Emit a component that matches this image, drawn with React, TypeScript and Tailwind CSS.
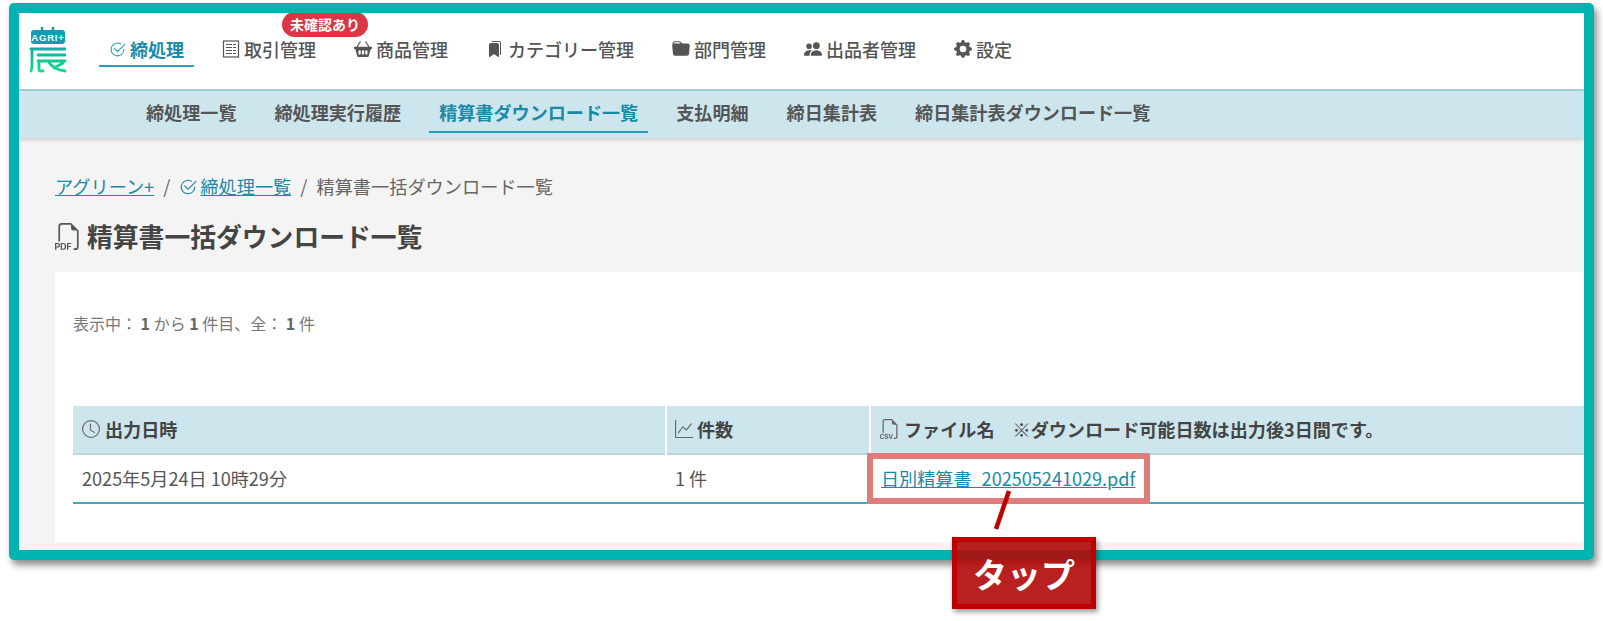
import type { ReactNode } from "react";
import {
  BsBasket2Fill,
  BsBookmarksFill,
  BsCheck2Circle,
  BsClock,
  BsFiletypeCsv,
  BsFiletypePdf,
  BsFolderFill,
  BsGearFill,
  BsGraphUp,
  BsPeopleFill,
} from "react-icons/bs";

function Logo() {
  return (
    <svg width="38" height="48" viewBox="0 0 38 48" fill="none" className="mt-[-2px] shrink-0">
      <defs>
        <linearGradient id="logo" gradientUnits="userSpaceOnUse" x1="0" y1="20" x2="0" y2="46">
          <stop offset="0" stopColor="#12a8a8" />
          <stop offset="1" stopColor="#12e08a" />
        </linearGradient>
      </defs>
      <path d="M13 1v4M24 1v4" stroke="#0f9ab0" strokeWidth="2.400" />
      <rect x="2" y="4" width="34" height="14" rx="3" fill="#0e9fb0" />
      <text x="19" y="14.500" textAnchor="middle" fill="#fff" fontSize="9.500" fontWeight="700" letterSpacing="0.8" fontFamily="Liberation Sans, sans-serif">
        AGRI+
      </text>
      <path
        d="M2 23h34M9 29h27M9 35h27M3 23v16c0 3-.5 4.500-1 6M10 35v9c0 1 1 1 4 1M19 35c3 5 9 9 17 10M34 37l-9 5"
        stroke="url(#logo)"
        strokeWidth="2.800"
        strokeLinecap="round"
      />
    </svg>
  );
}

function ListIcon() {
  return (
    <svg width="18" height="18" viewBox="0 0 18 18" fill="none" stroke="#555" strokeWidth="1.2">
      <rect x="1.5" y="1" width="15" height="16" />
      <path d="M4 4.500h10M4 7.500h10M4 10.500h10M4 13.500h10" strokeDasharray="6 1 3" />
    </svg>
  );
}

function MainNavItem({ icon, label, active, badge }: { icon: ReactNode; label: string; active?: boolean; badge?: boolean }) {
  return (
    <div
      className={`relative flex h-[30px] items-center gap-1 border-b-2 px-2.5 pb-[3px] text-[18px] ${
        active ? "border-[#2a9dbb] font-bold text-[#1a8aa8]" : "border-transparent font-medium text-[#555]"
      }`}
    >
      {icon}
      <span>{label}</span>
      {badge && (
        <span className="absolute left-[70px] top-[-25px] flex h-[25px] w-[86px] items-center justify-center rounded-full bg-[#dc3545] text-[14px] font-bold text-white">
          未確認あり
        </span>
      )}
    </div>
  );
}

function SubNavItem({ label, active }: { label: string; active?: boolean }) {
  return (
    <div
      className={`flex h-[34px] items-center border-b-2 px-2.5 pb-[4px] text-[18.100px] font-bold ${
        active ? "border-[#2a9dbb] text-[#1a8aa8]" : "border-transparent text-[#555]"
      }`}
    >
      {label}
    </div>
  );
}

export default function App() {
  return (
    <div className="h-[621px] w-full overflow-hidden bg-white pl-[9px] pr-[9px] pt-[3px] text-[#555]" style={{ fontFamily: '"Noto Sans CJK JP", "Noto Sans", sans-serif' }}>
      <div className="relative h-[557px] rounded-[5px] border-[10px] border-[#00b2b0] shadow-[3px_5px_7px_rgba(0,0,0,0.45)]">
        <div className="flex h-full flex-col overflow-hidden">
          {/* top nav */}
          <header className="flex h-[78px] shrink-0 items-center border-b-2 border-[#9fd0dc] bg-white pl-[10px]">
            <Logo />
            <nav className="ml-[32px] mt-[1px] flex gap-[18px]">
              <MainNavItem icon={<BsCheck2Circle className="text-[17px] text-[#2a9dbb]" />} label="締処理" active />
              <MainNavItem icon={<ListIcon />} label="取引管理" badge />
              <MainNavItem icon={<BsBasket2Fill className="text-[18px]" />} label="商品管理" />
              <MainNavItem icon={<span className="flex w-[18px] justify-center"><BsBookmarksFill className="text-[16px]" /></span>} label="カテゴリー管理" />
              <MainNavItem icon={<BsFolderFill className="text-[18px]" />} label="部門管理" />
              <MainNavItem icon={<BsPeopleFill className="text-[18px]" />} label="出品者管理" />
              <MainNavItem icon={<BsGearFill className="text-[18px]" />} label="設定" />
            </nav>
          </header>

          {/* sub nav */}
          <div className="z-10 flex h-[47px] shrink-0 items-start gap-[18px] bg-[#cde6ee] pl-[117px] pt-[8px] shadow-[0_2px_4px_rgba(0,0,0,0.15)]">
            <SubNavItem label="締処理一覧" />
            <SubNavItem label="締処理実行履歴" />
            <SubNavItem label="精算書ダウンロード一覧" active />
            <SubNavItem label="支払明細" />
            <SubNavItem label="締日集計表" />
            <SubNavItem label="締日集計表ダウンロード一覧" />
          </div>

          <main className="flex-1 bg-[#f4f4f4] pl-[36px] pt-[36px]">
            <div className="flex h-[26px] items-center gap-[9px] text-[18.200px] text-[#666]">
              <a className="text-[#1a8aa8] underline">アグリーン+</a>
              <span>/</span>
              <span className="flex items-center text-[#1a8aa8]">
                <BsCheck2Circle className="mr-[3px] text-[18px]" />
                <a className="underline">締処理一覧</a>
              </span>
              <span>/</span>
              <span>精算書一括ダウンロード一覧</span>
            </div>

            <h1 className="mt-[18px] flex h-[36px] items-center gap-[5px] text-[25.800px] font-bold text-[#444]">
              <BsFiletypePdf className="text-[27px] text-[#555]" />
              精算書一括ダウンロード一覧
            </h1>

            <section className="mt-[18px] h-[270px] bg-white pl-[18px]">
              <p className="pt-[39px] text-[16px] leading-[24px] text-[#777]">
                表示中： <b className="font-bold text-[#666]">1</b> から <b className="font-bold text-[#666]">1</b> 件目、全： <b className="font-bold text-[#666]">1</b> 件
              </p>

              <table className="mt-[71px] w-full table-fixed border-collapse text-[18.100px]">
                <colgroup>
                  <col className="w-[593px]" />
                  <col className="w-[204px]" />
                  <col />
                </colgroup>
                <thead>
                  <tr className="h-[48px] border-b-2 border-[#bcd6df] bg-[#cde6ee] text-left font-bold text-[#444]">
                    <th className="border-r-2 border-white pl-[9px]">
                      <span className="flex items-center gap-[5px]">
                        <BsClock className="text-[18px] text-[#666]" />
                        出力日時
                      </span>
                    </th>
                    <th className="border-r-2 border-white pl-[8px]">
                      <span className="flex items-center gap-[4px]">
                        <BsGraphUp className="text-[18px] text-[#666]" />
                        件数
                      </span>
                    </th>
                    <th className="whitespace-nowrap pl-[9px]">
                      <span className="flex items-center gap-[4px]">
                        <BsFiletypeCsv className="text-[20px] text-[#666]" />
                        ファイル名　※ダウンロード可能日数は出力後3日間です。
                      </span>
                    </th>
                  </tr>
                </thead>
                <tbody>
                  <tr className="h-[49px] border-b-2 border-[#3fa9bf] text-[#555]">
                    <td className="pl-[9px]">2025年5月24日 10時29分</td>
                    <td className="pl-[9px]">1 件</td>
                    <td className="pl-[11px]">
                      <a className="text-[#1a8aa8] underline">日別精算書_202505241029.pdf</a>
                    </td>
                  </tr>
                </tbody>
              </table>
            </section>
          </main>
        </div>

        {/* annotation over the screenshot */}
        <div className="absolute left-[848px] top-[440px] h-[51px] w-[283px] border-[6px] border-[#e07c7c]" />
        <svg className="absolute left-[970px] top-[476px]" width="30" height="42" viewBox="0 0 30 42">
          <path d="M20 2 7 40" stroke="#c00000" strokeWidth="4.500" />
        </svg>
        <div className="absolute left-[933px] top-[524px] flex h-[72px] w-[144px] items-center justify-center border-[5px] border-[#c00000] bg-[#b10909]/90 text-[34px] font-bold text-white shadow-[2px_3px_5px_rgba(0,0,0,0.4)]">
          タップ
        </div>
      </div>
    </div>
  );
}
